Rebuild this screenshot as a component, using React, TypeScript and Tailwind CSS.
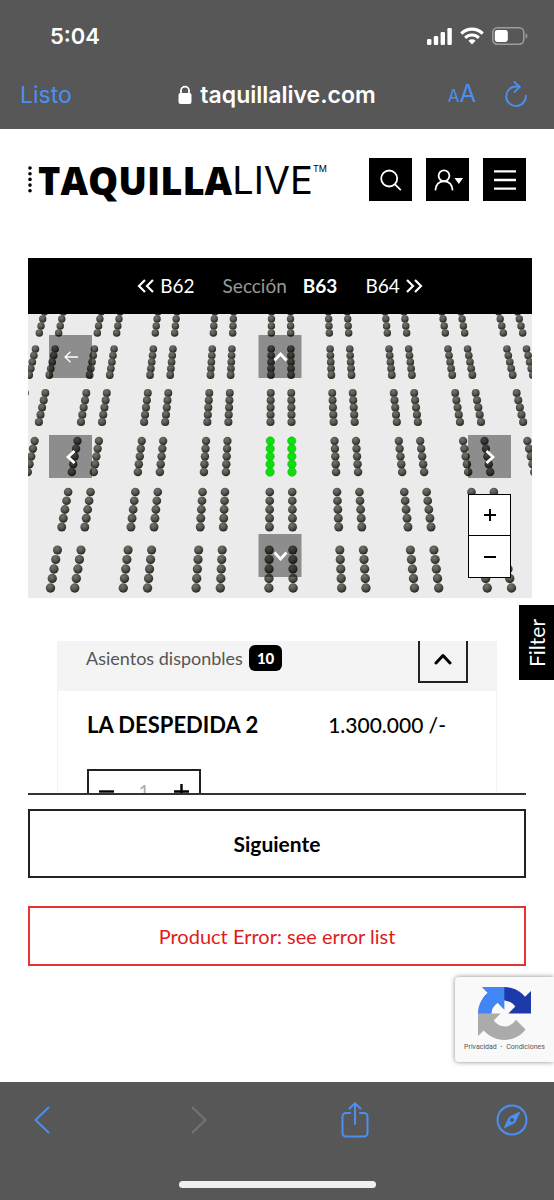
import type { ReactNode } from "react";

const BLOCKS = [
  { top: -2, bottom: 19, seats: 4 },
  { top: 35, bottom: 61, seats: 5 },
  { top: 79, bottom: 108, seats: 5 },
  { top: 127, bottom: 158, seats: 5 },
  { top: 178, bottom: 213, seats: 5 },
  { top: 236, bottom: 274, seats: 5 },
];
const CENTER_X = 253;

type Seat = { x: number; y: number; r: number; free: boolean };

function buildSeats(): Seat[] {
  const seats: Seat[] = [];
  BLOCKS.forEach((block, row) => {
    for (let col = -4; col <= 4; col++) {
      for (const side of [-1, 1]) {
        for (let i = 0; i < block.seats; i++) {
          const y = block.top + ((block.bottom - block.top) * i) / (block.seats - 1);
          const pitch = 58 + 0.058 * (y - 19);
          seats.push({
            x: CENTER_X + col * pitch + (side * pitch) / 6,
            y,
            r: pitch / 15.5,
            free: row === 3 && col === 0,
          });
        }
      }
    }
  });
  return seats;
}

const SEATS = buildSeats();

function SeatMap() {
  return (
    <svg
      viewBox="0 0 504 284"
      preserveAspectRatio="xMidYMid slice"
      className="block h-[284px] w-full bg-[#ebebeb]"
      aria-hidden="true"
    >
      <defs>
        <radialGradient id="seat" cx="0.4" cy="0.3" r="0.75">
          <stop offset="0" stopColor="#74736b" />
          <stop offset="0.5" stopColor="#55544d" />
          <stop offset="1" stopColor="#1d1c18" />
        </radialGradient>
      </defs>
      {SEATS.map((s, i) => (
        <circle
          key={i}
          cx={s.x}
          cy={s.y}
          r={s.r}
          fill={s.free ? "#0be00b" : "url(#seat)"}
          stroke={s.free ? "#16b516" : "none"}
          strokeWidth="0.6"
        />
      ))}
    </svg>
  );
}

function Stroke({
  d,
  box,
  className,
  width = 2,
  round = false,
}: {
  d: string;
  box: string;
  className: string;
  width?: number;
  round?: boolean;
}) {
  return (
    <svg
      viewBox={box}
      className={className}
      fill="none"
      stroke="currentColor"
      strokeWidth={width}
      strokeLinecap={round ? "round" : "butt"}
      strokeLinejoin={round ? "round" : "miter"}
      aria-hidden="true"
    >
      <path d={d} />
    </svg>
  );
}

function MapButton({ label, place, children }: { label: string; place: string; children: ReactNode }) {
  return (
    <button
      type="button"
      aria-label={label}
      className={`absolute flex size-[43px] items-center justify-center bg-black/40 text-white ${place}`}
    >
      {children}
    </button>
  );
}

function HeaderButton({ label, children }: { label: string; children: ReactNode }) {
  return (
    <button type="button" aria-label={label} className="flex size-[43px] items-center justify-center bg-black text-white">
      {children}
    </button>
  );
}

function ToolbarButton({ label, disabled, children }: { label: string; disabled?: boolean; children: ReactNode }) {
  return (
    <button
      type="button"
      aria-label={label}
      disabled={disabled}
      className="flex h-9 w-8 items-center justify-center disabled:text-[#737373]"
    >
      {children}
    </button>
  );
}

function BrowserTop() {
  return (
    <header className="bg-[#575757] font-['Inter','Liberation_Sans',sans-serif] text-white">
      <div className="flex h-[60px] items-end justify-between pr-[26px] pb-3 pl-[50px]">
        <span className="text-[22px] leading-6 font-semibold">5:04</span>
        <div className="flex h-6 items-center gap-2">
          <svg viewBox="0 0 25 17" className="h-[17px] w-[25px]" fill="currentColor" aria-hidden="true">
            <rect x="0" y="11" width="4.4" height="6" rx="1.2" />
            <rect x="6.8" y="8" width="4.4" height="9" rx="1.2" />
            <rect x="13.6" y="4" width="4.4" height="13" rx="1.2" />
            <rect x="20.4" y="0" width="4.4" height="17" rx="1.2" />
          </svg>
          <svg viewBox="0 0 24 18" className="h-[18px] w-6" fill="none" stroke="currentColor" strokeWidth="3.2" aria-hidden="true">
            <path d="M1.3 6.6a15.2 15.2 0 0 1 21.4 0" />
            <path d="M5.2 10.8a9.7 9.7 0 0 1 13.6 0" />
            <path d="M8.4 13.8a5.2 5.2 0 0 1 7.2 0L12 17.4Z" fill="currentColor" stroke="none" />
          </svg>
          <svg viewBox="0 0 36 18" className="h-[18px] w-9" aria-hidden="true">
            <rect x="0.8" y="0.8" width="31" height="16.4" rx="4.6" fill="none" stroke="#9d9d9d" strokeWidth="1.5" />
            <rect x="2.8" y="3" width="13" height="12" rx="2.4" fill="#fff" />
            <path d="M33.6 6.3c2.4 1 2.4 4.4 0 5.4Z" fill="#9d9d9d" />
          </svg>
        </div>
      </div>
      <div className="grid h-[69px] grid-cols-[1fr_auto_1fr] items-center px-5">
        <button type="button" className="justify-self-start text-[23px] leading-7 text-[#4b8ff2]">
          Listo
        </button>
        <div className="flex items-center gap-2">
          <svg viewBox="0 0 14 19" className="h-[19px] w-3.5" aria-hidden="true">
            <rect x="0.5" y="8" width="13" height="11" rx="2" fill="#fff" />
            <path d="M3 9V5.6a4 4 0 0 1 8 0V9" fill="none" stroke="#fff" strokeWidth="1.8" />
          </svg>
          <span className="text-[23px] leading-7 font-semibold">taquillalive.com</span>
        </div>
        <div className="flex items-center gap-7 justify-self-end pr-1.5 text-[#4b8ff2]">
          <button type="button" aria-label="Tamaño del texto" className="leading-7">
            <span className="text-[17px]">A</span>
            <span className="text-[24px]">A</span>
          </button>
          <button type="button" aria-label="Recargar">
            <svg viewBox="0 0 24 28" className="h-7 w-6" fill="none" stroke="currentColor" strokeWidth="1.9" aria-hidden="true">
              <path d="M21.8 14.8a9.8 9.8 0 1 1-9.8-9.3h3.4" strokeLinecap="round" />
              <path d="M10.4 1l5.4 4.9-5.2 5" strokeLinecap="round" strokeLinejoin="round" />
            </svg>
          </button>
        </div>
      </div>
    </header>
  );
}

function SiteHeader() {
  return (
    <div className="flex items-center justify-between">
      <a href="#inicio" className="flex items-center text-black">
        <svg viewBox="0 0 4 27" className="mr-1.5 h-[27px] w-1" aria-hidden="true">
          {[2, 7.7, 13.4, 19.1, 24.8].map((y) => (
            <circle key={y} cx="2" cy={y} r="1.8" />
          ))}
        </svg>
        <span className="flex text-[38px] leading-[42px]">
          <span className="font-['Open_Sans','Noto_Sans',sans-serif] font-extrabold">TAQUILLA</span>
          <span className="font-['Inter','Noto_Sans',sans-serif] font-normal">LIVE</span>
          <span className="pt-1 font-['Inter',sans-serif] text-[9px] leading-3">TM</span>
        </span>
      </a>
      <div className="flex gap-3.5">
        <HeaderButton label="Buscar">
          <Stroke box="0 0 22 22" className="size-[22px]" width={1.8} d="M17.2 9.5a8 8 0 1 1-16 0a8 8 0 0 1 16 0M14.8 15.2l6 6" />
        </HeaderButton>
        <HeaderButton label="Cuenta">
          <svg viewBox="0 0 30 22" className="h-[22px] w-[30px]" fill="none" stroke="currentColor" strokeWidth="1.8" aria-hidden="true">
            <circle cx="11" cy="6.8" r="5.4" />
            <path d="M2.4 21.4c.4-5.4 3.2-9 8.6-9s8.2 3.6 8.6 9" />
            <path d="M21.5 9h8.5l-4.2 6Z" fill="currentColor" stroke="none" />
          </svg>
        </HeaderButton>
        <HeaderButton label="Menú">
          <Stroke box="0 0 22 22" className="size-[22px]" width={2.4} d="M0 2.4h22M0 11h22M0 19.6h22" />
        </HeaderButton>
      </div>
    </div>
  );
}

function SectionMap() {
  return (
    <section className="mt-[57px] -mr-1.5" aria-label="Mapa de asientos">
      <nav className="flex h-14 items-center justify-center bg-black text-[19px] leading-6 text-white">
        <a href="#b62" className="flex items-center gap-1.5">
          <Stroke box="0 0 17 14" className="h-3.5 w-[17px]" width={2.2} d="M8 1L2 7l6 6M16 1l-6 6l6 6" />
          B62
        </a>
        <span className="ml-7 text-[#999]">Sección</span>
        <span className="ml-4 font-bold">B63</span>
        <a href="#b64" className="ml-7 flex items-center gap-1.5">
          B64
          <Stroke box="0 0 17 14" className="h-3.5 w-[17px]" width={2.2} d="M1 1l6 6l-6 6M9 1l6 6l-6 6" />
        </a>
      </nav>
      <div className="relative">
        <SeatMap />
        <MapButton label="Volver" place="top-[21px] left-[21px]">
          <Stroke box="0 0 14 12" className="h-3 w-3.5" width={1.3} d="M14 6H1M6.5 .7L1 6l5.5 5.3" />
        </MapButton>
        <MapButton label="Arriba" place="top-[21px] left-1/2 -translate-x-1/2">
          <Stroke box="0 0 14 10" className="h-2.5 w-3.5" width={2.8} d="M1 8.5L7 2l6 6.5" />
        </MapButton>
        <MapButton label="Izquierda" place="top-[121px] left-[21px]">
          <Stroke box="0 0 10 14" className="h-3.5 w-2.5" width={2.8} d="M8.5 1L2 7l6.5 6" />
        </MapButton>
        <MapButton label="Derecha" place="top-[121px] right-[21px]">
          <Stroke box="0 0 10 14" className="h-3.5 w-2.5" width={2.8} d="M1.5 1L8 7l-6.5 6" />
        </MapButton>
        <MapButton label="Abajo" place="bottom-[21px] left-1/2 -translate-x-1/2">
          <Stroke box="0 0 14 10" className="h-2.5 w-3.5" width={2.8} d="M1 1.5L7 8l6-6.5" />
        </MapButton>
        <div className="absolute right-[21px] bottom-5 w-[43px] divide-y divide-black border border-black bg-white">
          <button type="button" aria-label="Acercar" className="flex h-[41px] w-full items-center justify-center">
            <Stroke box="0 0 12 12" className="size-3" width={2} d="M0 6h12M6 0v12" />
          </button>
          <button type="button" aria-label="Alejar" className="flex h-[41px] w-full items-center justify-center">
            <Stroke box="0 0 12 12" className="size-3" width={2} d="M0 6h12" />
          </button>
        </div>
      </div>
    </section>
  );
}

function TicketList() {
  return (
    <section className="mt-[43px] h-[154px] overflow-hidden border-b-2 border-[#333] px-[29px]" aria-label="Entradas">
      <div className="h-[200px] border-x border-[#f2f2f2]">
        <div className="flex h-[50px] items-start justify-between bg-[#f4f4f4] px-7">
          <div className="flex items-center gap-1.5 pt-1 text-[18px] leading-[26px] text-[#555]">
            Asientos disponbles
            <span className="rounded-md bg-black px-2 text-[15px] leading-[26px] font-black text-white">10</span>
          </div>
          <button
            type="button"
            aria-label="Contraer"
            className="flex h-[42px] w-[50px] items-center justify-center border-2 border-t-0 border-[#222] pb-1"
          >
            <Stroke box="0 0 18 12" className="h-3 w-[18px]" width={3} round d="M2 10L9 2.5l7 7.5" />
          </button>
        </div>
        <div className="flex items-center justify-between pt-5 pr-[50px] pl-[29px] leading-7 text-black">
          <h2 className="text-[22px] font-bold">LA DESPEDIDA 2</h2>
          <span className="text-[21px] font-medium">1.300.000 /-</span>
        </div>
        <div className="mt-[30px] ml-[29px] flex h-11 w-[114px] items-center justify-between border-2 border-[#222] px-2.5">
          <button type="button" aria-label="Quitar">
            <Stroke box="0 0 15 15" className="size-[15px]" width={2.4} d="M0 7.5h15" />
          </button>
          <input
            type="text"
            aria-label="Cantidad"
            defaultValue="1"
            className="w-6 bg-transparent text-center text-[18px] leading-6 text-[#aaa] outline-none"
          />
          <button type="button" aria-label="Añadir">
            <Stroke box="0 0 15 15" className="size-[15px]" width={2.4} d="M0 7.5h15M7.5 0v15" />
          </button>
        </div>
      </div>
    </section>
  );
}

function RecaptchaBadge() {
  return (
    <aside className="absolute right-0 bottom-5 flex h-[85px] w-[99px] flex-col items-center rounded-l-sm bg-[#f9f9f9] pt-2.5 shadow-[0_0_5px_#888]">
      <svg viewBox="0 0 64 64" className="size-[53px]" aria-hidden="true">
        <path
          fill="#1c3aa9"
          d="M64 31.955l-.033-1.37V4.687l-7.16 7.16C50.948 4.674 42.033.093 32.05.093c-10.4 0-19.622 4.96-25.458 12.64l11.736 11.86a15.55 15.55 0 0 1 4.754-5.334c2.05-1.6 4.952-2.906 8.968-2.906.485 0 .86.057 1.135.163 4.976.393 9.288 3.14 11.828 7.124l-8.307 8.307L64 31.953"
        />
        <path
          fill="#4285f4"
          d="M31.862.094l-1.37.033H4.594l7.16 7.16C4.58 13.147 0 22.06 0 32.046c0 10.4 4.96 19.622 12.64 25.458L24.5 45.768a15.55 15.55 0 0 1-5.334-4.754c-1.6-2.05-2.906-4.952-2.906-8.968 0-.485.057-.86.163-1.135.393-4.976 3.14-9.288 7.124-11.828l8.307 8.307L31.86.095"
        />
        <path
          fill="#ababab"
          d="M.001 32.045l.033 1.37v25.898l7.16-7.16c5.86 7.173 14.774 11.754 24.76 11.754 10.4 0 19.622-4.96 25.458-12.64l-11.736-11.86a15.55 15.55 0 0 1-4.754 5.334c-2.05 1.6-4.952 2.906-8.968 2.906-.485 0-.86-.057-1.135-.163-4.976-.393-9.288-3.14-11.828-7.124l8.307-8.307c-10.522.04-22.4.066-27.295-.005"
        />
      </svg>
      <p className="mt-px font-[Roboto,sans-serif] text-[7px] leading-3 whitespace-nowrap text-[#555]">
        <a href="#privacidad">Privacidad</a>
        <span className="mx-0.5"> - </span>
        <a href="#condiciones">Condiciones</a>
      </p>
    </aside>
  );
}

function BrowserBottom() {
  return (
    <footer className="flex h-[118px] flex-col items-center justify-between bg-[#575757] pt-5 pb-3 text-[#4b8ff2]">
      <div className="flex w-full items-center justify-between px-[26px]">
        <ToolbarButton label="Atrás">
          <Stroke box="0 0 16 28" className="h-7 w-4" width={2} round d="M14.5 1.5L1.5 14l13 12.5" />
        </ToolbarButton>
        <ToolbarButton label="Adelante" disabled>
          <Stroke box="0 0 16 28" className="h-7 w-4" width={2} round d="M1.5 1.5L14.5 14l-13 12.5" />
        </ToolbarButton>
        <ToolbarButton label="Compartir">
          <Stroke
            box="0 0 28 36"
            className="h-9 w-7"
            width={2}
            round
            d="M9 11H5a3.5 3.5 0 0 0-3.5 3.5v16.5a3.5 3.5 0 0 0 3.5 3.5h18a3.5 3.5 0 0 0 3.5-3.5v-16.5A3.5 3.5 0 0 0 23 11h-4M14 22V1.5M8.5 6.5L14 1.2l5.5 5.3"
          />
        </ToolbarButton>
        <ToolbarButton label="Abrir en Safari">
          <svg viewBox="0 0 32 32" className="size-8" aria-hidden="true">
            <circle cx="16" cy="16" r="14.5" fill="none" stroke="currentColor" strokeWidth="2" />
            <path
              fill="currentColor"
              fillRule="evenodd"
              d="M24.4 7.6C22.5 12 21 15.5 19 19C15.5 21 12 22.5 7.6 24.4C9.5 20 11 16.5 13 13C16.5 11 20 9.5 24.4 7.6ZM16 14a2 2 0 1 0 0 4a2 2 0 0 0 0-4"
            />
          </svg>
        </ToolbarButton>
      </div>
      <div className="h-[7px] w-[197px] rounded-full bg-[#efefef]" />
    </footer>
  );
}

export default function App() {
  return (
    <div className="flex min-h-screen flex-col bg-white font-[Lato,'Liberation_Sans',sans-serif]">
      <BrowserTop />
      <main className="relative flex-1 px-7 pt-[29px] pb-12">
        <SiteHeader />
        <SectionMap />
        <TicketList />
        <button type="button" className="mt-3.5 h-[69px] w-full border-2 border-[#222] text-[21px] leading-6 font-bold text-black">
          Siguiente
        </button>
        <p role="alert" className="mt-7 border-2 border-[#e53535] py-[15px] text-center text-[20px] leading-[26px] text-[#e01b1b]">
          Product Error: see error list
        </p>
        <button
          type="button"
          className="absolute top-[476px] right-0 flex h-[75px] w-[35px] rotate-180 items-center justify-center bg-black text-[21px] leading-6 text-white [writing-mode:vertical-rl]"
        >
          Filter
        </button>
        <RecaptchaBadge />
      </main>
      <BrowserBottom />
    </div>
  );
}
